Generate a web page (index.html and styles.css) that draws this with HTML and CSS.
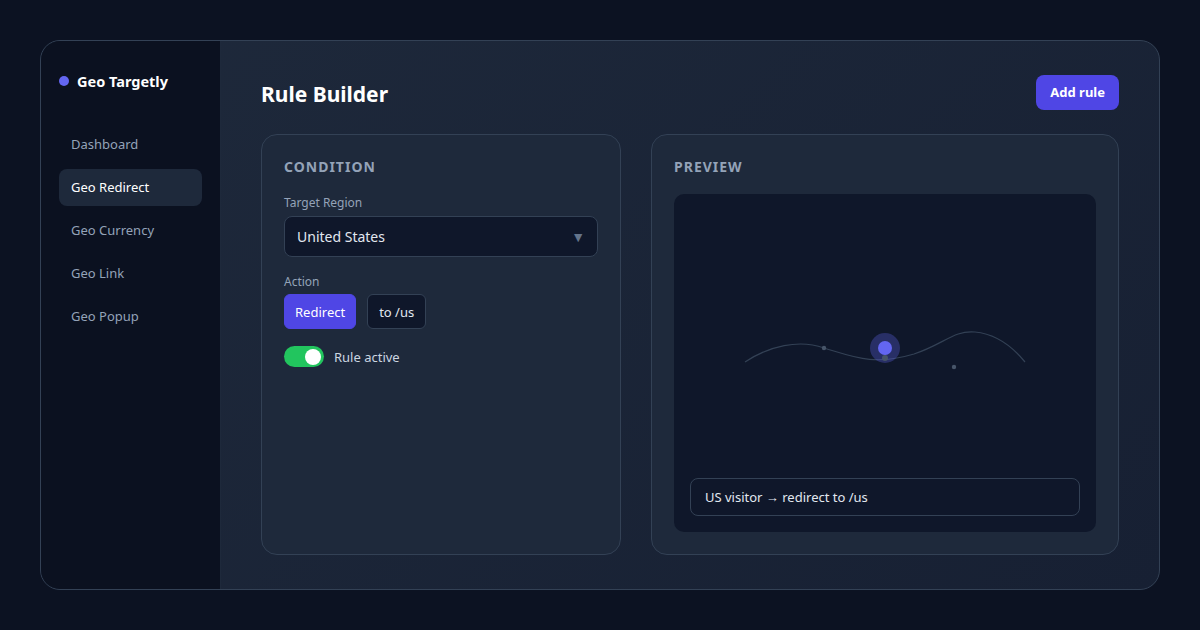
FILE: index.html
```html
<!DOCTYPE html>
<html lang="en">
<head>
    <meta charset="UTF-8">
    <meta name="viewport" content="width=device-width, initial-scale=1.0">
    <title>Geo Targetly - Rule Builder</title>
    <link rel="stylesheet" href="styles.css">
</head>
<body>
    <div class="app">
        <aside class="sidebar">
            <div class="brand"><span class="brand-dot"></span>Geo Targetly</div>
            <nav class="nav">
                <a class="nav-item">Dashboard</a>
                <a class="nav-item active">Geo Redirect</a>
                <a class="nav-item">Geo Currency</a>
                <a class="nav-item">Geo Link</a>
                <a class="nav-item">Geo Popup</a>
            </nav>
        </aside>
        <main class="main">
            <div class="header">
                <h1>Rule Builder</h1>
                <button class="btn-primary">Add rule</button>
            </div>
            <div class="cards">
                <section class="card">
                    <h2>Condition</h2>
                    <label class="field-label">Target Region</label>
                    <div class="select">
                        <span>United States</span>
                        <span class="caret">&#9660;</span>
                    </div>
                    <label class="field-label action-label">Action</label>
                    <div class="actions">
                        <button class="chip chip-primary">Redirect</button>
                        <button class="chip">to /us</button>
                    </div>
                    <div class="toggle-row">
                        <span class="toggle"><span class="knob"></span></span>
                        <span>Rule active</span>
                    </div>
                </section>
                <section class="card">
                    <h2>Preview</h2>
                    <div class="preview">
                        <svg class="map" width="421" height="284" viewBox="0 0 421 284">
                            <path d="M71 168 C95 152 125 145 150 154 C180 163 200 172 240 160 C270 150 280 136 301 138 C322 140 338 152 351 168" fill="none" stroke="#334155" stroke-width="1.2"/>
                            <circle cx="150" cy="154" r="2.2" fill="#475569"/>
                            <circle cx="280" cy="173" r="2.2" fill="#475569"/>
                            <circle cx="211" cy="154" r="15" fill="#6366f1" fill-opacity="0.3"/>
                            <circle cx="211" cy="164" r="3" fill="#475569"/>
                            <circle cx="211" cy="154" r="7" fill="#6366f1"/>
                        </svg>
                        <div class="caption">US visitor &rarr; redirect to /us</div>
                    </div>
                </section>
            </div>
        </main>
    </div>
</body>
</html>
```

FILE: styles.css
```css
* {
    box-sizing: border-box;
}
body {
    margin: 0;
    width: 1200px;
    height: 630px;
    background: #0c1222;
    font-family: "Noto Sans", "Open Sans", sans-serif;
    color: #e2e8f0;
    padding: 40px;
}
.app {
    display: flex;
    width: 1120px;
    height: 550px;
    border: 1px solid #334155;
    border-radius: 20px;
    overflow: hidden;
    background: linear-gradient(135deg, #1e293b 0%, #172033 100%);
}
.sidebar {
    width: 180px;
    flex-shrink: 0;
    background: #0b1120;
    border-right: 1px solid #1e293b;
    padding: 30px 18px 0 18px;
}
.brand {
    display: flex;
    align-items: center;
    gap: 8px;
    font-weight: 700;
    font-size: 14.5px;
    color: #fff;
    margin-bottom: 35px;
}
.brand-dot {
    width: 10px;
    height: 10px;
    border-radius: 50%;
    background: #6366f1;
}
.nav {
    display: flex;
    flex-direction: column;
    gap: 6px;
}
.nav-item {
    display: block;
    height: 37px;
    line-height: 37px;
    padding: 0 12px;
    border-radius: 8px;
    font-size: 13px;
    color: #94a3b8;
}
.nav-item.active {
    background: #1e293b;
    color: #fff;
}
.main {
    flex: 1;
    padding: 34px 40px 35px 40px;
    display: flex;
    flex-direction: column;
}
.header {
    display: flex;
    justify-content: space-between;
    align-items: center;
    height: 34px;
    margin-bottom: 25px;
}
h1 {
    margin: 0;
    padding-top: 3px;
    font-size: 21px;
    font-weight: 700;
    color: #fff;
}
.btn-primary {
    height: 35px;
    padding: 0 14px;
    border: none;
    border-radius: 8px;
    background: #4f46e5;
    color: #fff;
    font-family: inherit;
    font-weight: 700;
    font-size: 13px;
}
.cards {
    flex: 1;
    display: grid;
    grid-template-columns: 360px 468px;
    gap: 30px;
}
.card {
    background: #1e293b;
    border: 1px solid #334155;
    border-radius: 16px;
    padding: 22px 22px;
    display: flex;
    flex-direction: column;
}
h2 {
    margin: 0 0 17px 0;
    font-size: 14px;
    font-weight: 700;
    letter-spacing: 1px;
    text-transform: uppercase;
    color: #94a3b8;
    line-height: 20px;
}
.field-label {
    font-size: 12px;
    color: #94a3b8;
    margin-bottom: 5px;
}
.select {
    display: flex;
    justify-content: space-between;
    align-items: center;
    height: 41px;
    padding: 0 12px;
    background: #0f172a;
    border: 1px solid #334155;
    border-radius: 8px;
    font-size: 14px;
    color: #e2e8f0;
}
.caret {
    color: #64748b;
    font-size: 14px;
}
.action-label {
    margin-top: 16px;
}
.actions {
    display: flex;
    gap: 11px;
    margin-top: -1px;
}
.chip {
    height: 35px;
    padding: 0 11px;
    border: 1px solid #334155;
    border-radius: 6px;
    background: #0f172a;
    color: #e2e8f0;
    font-family: inherit;
    font-size: 13px;
}
.chip-primary {
    padding: 0 10px;
    background: #4f46e5;
    border-color: #4f46e5;
    color: #fff;
}
.toggle-row {
    display: flex;
    align-items: center;
    gap: 10px;
    margin-top: 17px;
    font-size: 13px;
    color: #cbd5e1;
}
.toggle {
    display: flex;
    justify-content: flex-end;
    align-items: center;
    width: 40px;
    height: 21px;
    padding: 0 3px;
    border-radius: 11px;
    background: #22c55e;
}
.knob {
    width: 16px;
    height: 16px;
    border-radius: 50%;
    background: #fff;
}
.preview {
    flex: 1;
    background: #0f172a;
    border-radius: 10px;
    display: flex;
    flex-direction: column;
    padding: 0 16px 16px 16px;
}
.map {
    display: block;
    margin: 0 -16px;
    flex: 1;
}
.caption {
    height: 38px;
    line-height: 36px;
    border: 1px solid #334155;
    border-radius: 8px;
    padding: 0 14px;
    font-size: 13px;
    color: #e2e8f0;
}
```
